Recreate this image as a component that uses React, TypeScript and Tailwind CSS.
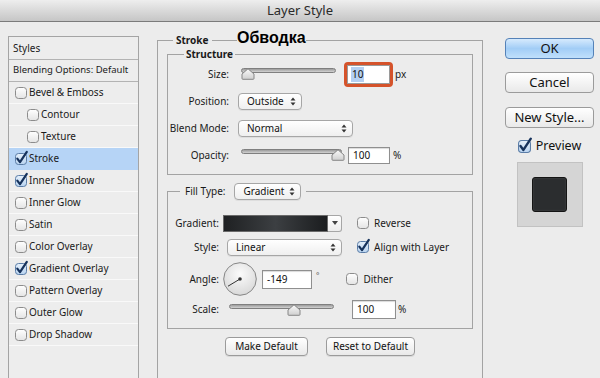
import React from "react";

function Check({ checked = false, size = 12 }: { checked?: boolean; size?: number }) {
  return (
    <svg width={size} height={size} viewBox="0 0 12 12" className="shrink-0 overflow-visible">
      <defs>
        <linearGradient id="cbg" x1="0" y1="0" x2="0" y2="1">
          <stop offset="0" stopColor="#ffffff" />
          <stop offset="1" stopColor="#e4e4e4" />
        </linearGradient>
        <linearGradient id="cbgc" x1="0" y1="0" x2="0" y2="1">
          <stop offset="0" stopColor="#e6f0fb" />
          <stop offset="1" stopColor="#b8d3f0" />
        </linearGradient>
      </defs>
      <rect x="0.5" y="0.5" width="11" height="11" rx="3" fill={checked ? "url(#cbgc)" : "url(#cbg)"} stroke={checked ? "#5a7ca6" : "#8c8c8c"} />
      {checked && (
        <path d="M2.3 5.6 L5 9.2 L11.8 -1.2" fill="none" stroke="#16325c" strokeWidth="2.2" strokeLinecap="round" strokeLinejoin="round" />
      )}
    </svg>
  );
}

function Arrows() {
  return (
    <svg width="6" height="9" viewBox="0 0 6 9" className="shrink-0">
      <path d="M0.5 3.5 L3 0.5 L5.5 3.5 Z" fill="#333" />
      <path d="M0.5 5.5 L3 8.5 L5.5 5.5 Z" fill="#333" />
    </svg>
  );
}

function Select({ w, children }: { w: string; children: React.ReactNode }) {
  return (
    <div className={`${w} h-[17px] shrink-0 flex items-center justify-between pl-[8px] pr-[5px] rounded-[4px] border border-[#a6a6a6] bg-linear-to-b from-white to-[#efefef] shadow-[0_1px_0_rgba(0,0,0,0.06)] text-[10px] text-[#111]`}>
      <span>{children}</span>
      <Arrows />
    </div>
  );
}

function Thumb() {
  return (
    <svg width="14" height="12" viewBox="0 0 14 12">
      <defs>
        <linearGradient id="thg" x1="0" y1="0" x2="0" y2="1">
          <stop offset="0" stopColor="#fafafa" />
          <stop offset="1" stopColor="#cfcfcf" />
        </linearGradient>
      </defs>
      <path d="M1 6 L7 0.8 L13 6 V10.5 Q13 11.3 12.2 11.3 H1.8 Q1 11.3 1 10.5 Z" fill="url(#thg)" stroke="#7d7d7d" strokeWidth="0.9" />
    </svg>
  );
}

function Slider({ w, pos }: { w: string; pos: number }) {
  return (
    <div className={`relative ${w} h-[12px] shrink-0`}>
      <div className="absolute left-0 right-0 top-0 h-[5px] rounded-full border border-[#7f7f7f] bg-linear-to-b from-[#9c9c9c] to-[#d2d2d2]" />
      <div className="absolute top-0" style={{ left: `${pos}px` }}>
        <Thumb />
      </div>
    </div>
  );
}

function Field({ w, h, children }: { w: string; h: string; children: React.ReactNode }) {
  return (
    <div className={`${w} ${h} shrink-0 flex items-center pl-[4px] bg-white border border-[#8f8f8f] shadow-[inset_0_1px_1px_rgba(0,0,0,0.15)] text-[10px] text-[#111]`}>
      {children}
    </div>
  );
}

function Btn({ w, children }: { w: string; children: React.ReactNode }) {
  return (
    <div className={`${w} h-[19px] flex items-center justify-center rounded-[4px] border border-[#9b9b9b] bg-linear-to-b from-white to-[#e9e9e9] shadow-[0_1px_0_rgba(0,0,0,0.08)] text-[10px] text-[#111]`}>
      {children}
    </div>
  );
}

function BigBtn({ children, primary = false }: { children: React.ReactNode; primary?: boolean }) {
  return (
    <div
      className={
        primary
          ? "w-full h-[21px] flex items-center justify-center rounded-[4px] border border-[#5582b8] bg-linear-to-b from-[#d6eafd] via-[#a2cdf6] to-[#c0e0fb] text-[13px] text-[#111]"
          : "w-full h-[21px] flex items-center justify-center rounded-[4px] border border-[#9b9b9b] bg-linear-to-b from-white to-[#e9e9e9] text-[13px] text-[#111]"
      }
    >
      {children}
    </div>
  );
}

function Item({ label, checked = false, indent = false, selected = false }: { label: string; checked?: boolean; indent?: boolean; selected?: boolean }) {
  return (
    <div
      className={`h-[22px] shrink-0 flex items-center gap-[2px] border-b ${selected ? "bg-[#b6d4f6] border-[#b6d4f6]" : "border-[#f9f9f9]"} ${indent ? "pl-[18px]" : "pl-[6px]"}`}
    >
      <Check checked={checked} />
      <span>{label}</span>
    </div>
  );
}

export default function App() {
  return (
    <div className="w-[600px] h-[378px] overflow-hidden whitespace-nowrap bg-[#ececec] flex flex-col font-['Noto_Sans',sans-serif] text-[10px] text-[#1a1a1a]">
      <div className="h-[22px] shrink-0 flex items-center justify-center bg-linear-to-b from-[#eeeeee] to-[#c6c6c6] border-b border-[#7b7b7b] text-[13px] text-[#2a2a2a]">
        Layer Style
      </div>
      <div className="flex flex-1 min-h-0">
        {/* Left styles list */}
        <div className="ml-[8px] mt-[14px] w-[131px] h-[400px] shrink-0 border border-[#a4a4a4] bg-[#ededed] flex flex-col">
          <div className="h-[23px] flex items-center pl-[4px] border-b border-[#b3b3b3]">Styles</div>
          <div className="h-[22px] flex items-center pl-[4px] border-b border-[#b3b3b3] text-[9.5px]">Blending Options: Default</div>
          <Item label="Bevel & Emboss" />
          <Item label="Contour" indent />
          <Item label="Texture" indent />
          <Item label="Stroke" checked selected />
          <Item label="Inner Shadow" checked />
          <Item label="Inner Glow" />
          <Item label="Satin" />
          <Item label="Color Overlay" />
          <Item label="Gradient Overlay" checked />
          <Item label="Pattern Overlay" />
          <Item label="Outer Glow" />
          <Item label="Drop Shadow" />
        </div>

        {/* Middle */}
        <div className="relative ml-[18px] mt-[11px] w-[326px] shrink-0">
          <fieldset className="border border-[#a3a3a3] h-[380px] px-[9px]">
            <legend className="ml-[6px] px-[3px] font-bold leading-[14px]">Stroke</legend>

            <fieldset className="border border-[#a3a3a3] pb-[5px]">
              <legend className="ml-[16px] px-[2px] font-bold leading-[14px]">Structure</legend>
              <div className="h-[27px] flex items-center">
                <span className="w-[61px] text-right">Size:</span>
                <div className="ml-[12px] self-start mt-[7px]">
                  <Slider w="w-[95px]" pos={0} />
                </div>
                <div className="ml-[8px] w-[49px] h-[25px] rounded-[4px] border-[3px] border-[#d5532b] flex items-center bg-white">
                  <div className="w-full h-full flex items-center pl-[3px] border border-[#9a9a9a]">
                    <span className="bg-[#b4d0f2] px-[1px] text-[#111]">10</span>
                  </div>
                </div>
                <span className="ml-[2px]">px</span>
              </div>
              <div className="h-[27px] flex items-center">
                <span className="w-[61px] text-right">Position:</span>
                <div className="ml-[9px]">
                  <Select w="w-[64px]">Outside</Select>
                </div>
              </div>
              <div className="h-[27px] flex items-center">
                <span className="w-[61px] text-right">Blend Mode:</span>
                <div className="ml-[9px]">
                  <Select w="w-[115px]">Normal</Select>
                </div>
              </div>
              <div className="h-[27px] flex items-center">
                <span className="w-[61px] text-right">Opacity:</span>
                <div className="ml-[12px] self-start mt-[7px]">
                  <Slider w="w-[101px]" pos={90} />
                </div>
                <div className="ml-[6px]">
                  <Field w="w-[42px]" h="h-[17px]">100</Field>
                </div>
                <span className="ml-[3px]">%</span>
              </div>
            </fieldset>

            <fieldset className="border border-[#a3a3a3] mt-[8px] pb-[9px]">
              <legend className="ml-[12px] px-[5px] flex items-center gap-[9px]">
                <span>Fill Type:</span>
                <Select w="w-[67px]">Gradient</Select>
              </legend>
              <div className="mt-[12px] h-[22px] flex items-center">
                <span className="w-[51px] text-right">Gradient:</span>
                <div className="ml-[4px] flex">
                  <div className="w-[105px] h-[17px] border border-[#6a6a6a] bg-linear-to-r from-[#1f2123] via-[#3c3f42] to-[#1b1d1f]" />
                  <div className="w-[14px] h-[17px] flex items-center justify-center rounded-r-[3px] border border-l-0 border-[#a6a6a6] bg-linear-to-b from-white to-[#ececec]">
                    <svg width="6" height="4" viewBox="0 0 6 4">
                      <path d="M0 0 H6 L3 4 Z" fill="#444" />
                    </svg>
                  </div>
                </div>
                <div className="ml-[15px] flex items-center gap-[5px]">
                  <Check />
                  <span>Reverse</span>
                </div>
              </div>
              <div className="mt-[2px] h-[22px] flex items-center">
                <span className="w-[51px] text-right">Style:</span>
                <div className="ml-[8px]">
                  <Select w="w-[115px]">Linear</Select>
                </div>
                <div className="ml-[15px] flex items-center gap-[5px]">
                  <Check checked />
                  <span>Align with Layer</span>
                </div>
              </div>
              <div className="mt-[4px] h-[34px] flex items-center">
                <span className="w-[51px] text-right">Angle:</span>
                <svg width="34" height="34" viewBox="0 0 34 34" className="ml-[4px] shrink-0">
                  <defs>
                    <radialGradient id="dial" cx="0.5" cy="0.35" r="0.7">
                      <stop offset="0" stopColor="#fbfbfb" />
                      <stop offset="1" stopColor="#d6d6d6" />
                    </radialGradient>
                  </defs>
                  <circle cx="17" cy="17" r="16.3" fill="url(#dial)" stroke="#7b7b7b" strokeWidth="0.9" />
                  <line x1="17" y1="17" x2="5" y2="24.2" stroke="#333" strokeWidth="1" />
                  <circle cx="17" cy="17" r="1.8" fill="#333" />
                </svg>
                <div className="ml-[5px]">
                  <Field w="w-[50px]" h="h-[19px]">-149</Field>
                </div>
                <span className="ml-[4px] -mt-[6px] text-[8px] text-[#555]">°</span>
                <div className="ml-[27px] flex items-center gap-[5px]">
                  <Check />
                  <span>Dither</span>
                </div>
              </div>
              <div className="mt-[3px] h-[20px] flex items-center">
                <span className="w-[51px] text-right">Scale:</span>
                <div className="ml-[10px] self-start mt-[5px]">
                  <Slider w="w-[105px]" pos={58} />
                </div>
                <div className="ml-[18px]">
                  <Field w="w-[44px]" h="h-[19px]">100</Field>
                </div>
                <span className="ml-[2px]">%</span>
              </div>
            </fieldset>

            <div className="mt-[8px] flex justify-center gap-[18px]">
              <Btn w="w-[83px]">Make Default</Btn>
              <Btn w="w-[89px]">Reset to Default</Btn>
            </div>
          </fieldset>

          <span className="absolute left-[80px] -top-[3px] leading-none font-['Liberation_Sans',sans-serif] font-bold text-[16px] text-black bg-[#ececec]">
            Обводка
          </span>
        </div>

        {/* Right */}
        <div className="ml-[22px] mt-[16px] w-[89px] shrink-0 flex flex-col items-center">
          <BigBtn primary>OK</BigBtn>
          <div className="mt-[13px] w-full">
            <BigBtn>Cancel</BigBtn>
          </div>
          <div className="mt-[14px] w-full">
            <BigBtn>New Style...</BigBtn>
          </div>
          <div className="mt-[9px] flex items-center gap-[5px] text-[12.5px] text-[#111]">
            <Check checked size={13} />
            <span>Preview</span>
          </div>
          <div className="mt-[6px] w-[66px] h-[65px] flex items-center justify-center bg-[#d5d5d5] border border-[#c2c2c2]">
            <div className="w-[35px] h-[35px] rounded-[3px] bg-[#2b2d2f] border border-[#141414] shadow-[inset_0_0_2px_rgba(255,255,255,0.15)]" />
          </div>
        </div>
      </div>
    </div>
  );
}
